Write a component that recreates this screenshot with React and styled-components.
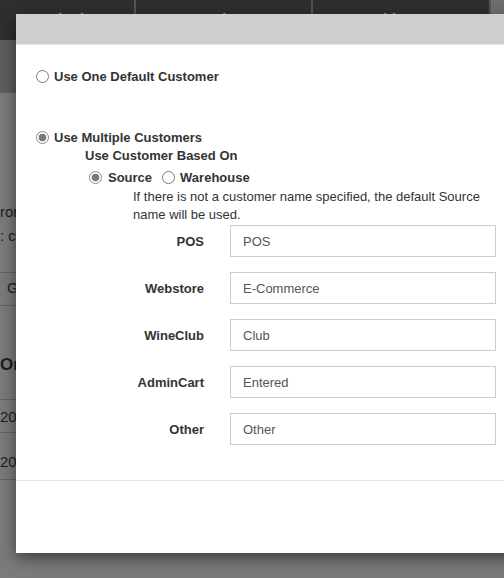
import React from 'react';
import styled, { createGlobalStyle } from 'styled-components';

const GlobalStyle = createGlobalStyle`
  html, body {
    margin: 0;
    padding: 0;
    overflow: hidden;
    background: #7b7b7b;
    font-family: "Liberation Sans", Arial, sans-serif;
  }
`;

const Page = styled.div`
  position: relative;
  width: 504px;
  height: 578px;
  overflow: hidden;
  background: #7b7b7b;
  display: flex;
  flex-direction: column;
`;

const NavBar = styled.div`
  height: 40px;
  display: flex;
  background: #2f2f2f;
  flex-shrink: 0;
`;

const NavTab = styled.div`
  width: ${props => props.width}px;
  flex-shrink: 0;
  border-right: 2px solid #555;
  color: #9a9a9a;
  font-size: 15px;
  font-weight: bold;
  display: flex;
  justify-content: center;
  padding-top: 10px;
  padding-left: ${props => props.indent || 0}px;
  box-sizing: border-box;
`;

const NavRest = styled.div`
  flex: 1;
  background: #6f6f6f;
`;

const SubBar = styled.div`
  height: 53px;
  background: #5d5d5d;
  flex-shrink: 0;
`;

const Content = styled.div`
  display: flex;
  flex-direction: column;
  color: #1e1e1e;
  font-size: 15px;
`;

const Line = styled.div`
  height: ${props => props.h}px;
  line-height: ${props => props.lh || props.h}px;
  padding-left: ${props => props.indent || 0}px;
  white-space: nowrap;
  font-weight: ${props => (props.bold ? 'bold' : 'normal')};
  font-size: ${props => props.size || 15}px;
  border-bottom: ${props => (props.rule ? '1px solid #646464' : 'none')};
  box-sizing: border-box;
`;

const Dialog = styled.div`
  position: absolute;
  left: 16px;
  top: 14px;
  width: 520px;
  height: 539px;
  background: #fff;
  box-shadow: 0 5px 15px rgba(0, 0, 0, 0.5);
  display: flex;
  flex-direction: column;
  color: #333;
  font-size: 13px;
`;

const DialogHeader = styled.div`
  height: 30px;
  background: #cfcfcf;
  border-bottom: 1px solid #e5e5e5;
  flex-shrink: 0;
`;

const DialogBody = styled.div`
  flex: 1;
  padding: 22px 20px 0 20px;
  display: flex;
  flex-direction: column;
`;

const DialogFooter = styled.div`
  height: 72px;
  border-top: 1px solid #e5e5e5;
  flex-shrink: 0;
`;

const Option = styled.label`
  display: flex;
  align-items: center;
  height: 18px;
  font-weight: bold;
  margin-top: ${props => props.mt || 0}px;
  margin-left: ${props => props.ml || 0}px;
  margin-right: ${props => props.mr || 0}px;
`;

const Radio = styled.span`
  width: 11px;
  height: 11px;
  border-radius: 50%;
  border: 1px solid ${props => (props.checked ? '#8a8a8a' : '#7a7a7a')};
  background: ${props => (props.checked
    ? 'radial-gradient(circle, #7a7a7a 0, #7a7a7a 3.5px, #fff 4.2px)'
    : '#fff')};
  margin-right: ${props => props.gap || 5}px;
  flex-shrink: 0;
`;

const SubHeading = styled.div`
  font-weight: bold;
  height: 18px;
  line-height: 18px;
  margin-top: 1px;
  margin-left: 49px;
`;

const ChoiceRow = styled.div`
  display: flex;
  height: 22px;
  align-items: center;
  margin-top: 1px;
  margin-left: 53px;
`;

const Help = styled.div`
  margin-left: 97px;
  width: 360px;
  line-height: 18px;
`;

const Form = styled.div`
  margin-top: 1px;
  display: grid;
  grid-template-columns: 168px 266px;
  column-gap: 26px;
  row-gap: 15px;
`;

const FieldLabel = styled.div`
  font-weight: bold;
  text-align: right;
  display: flex;
  align-items: center;
  justify-content: flex-end;
`;

const Input = styled.input`
  height: 32px;
  box-sizing: border-box;
  border: 1px solid #ccc;
  padding: 0 12px;
  font-family: "Liberation Sans", Arial, sans-serif;
  font-size: 13px;
  color: #555;
  outline: none;
`;

const fields = [
  ['POS', 'POS'],
  ['Webstore', 'E-Commerce'],
  ['WineClub', 'Club'],
  ['AdminCart', 'Entered'],
  ['Other', 'Other'],
];

export default function App() {
  return (
    <Page>
      <GlobalStyle />
      <NavBar>
        <NavTab width={136}>Marketing</NavTab>
        <NavTab width={177}>Settings</NavTab>
        <NavTab width={178} indent={20}>Shipments</NavTab>
        <NavRest />
      </NavBar>
      <SubBar />
      <Content>
        <Line h={107} />
        <Line h={24}>ront</Line>
        <Line h={24}>: cust</Line>
        <Line h={25} rule />
        <Line h={33} lh={29} indent={7} rule>Go</Line>
        <Line h={41} />
        <Line h={36} bold size={17}>Ord</Line>
        <Line h={17} rule />
        <Line h={33} rule>2021</Line>
        <Line h={47} lh={58} rule>2021</Line>
      </Content>

      <Dialog>
        <DialogHeader />
        <DialogBody>
          <Option>
            <Radio />
            Use One Default Customer
          </Option>
          <Option mt={43}>
            <Radio checked />
            Use Multiple Customers
          </Option>
          <SubHeading>Use Customer Based On</SubHeading>
          <ChoiceRow>
            <Option mr={10}>
              <Radio checked gap={6} />
              Source
            </Option>
            <Option>
              <Radio />
              Warehouse
            </Option>
          </ChoiceRow>
          <Help>
            If there is not a customer name specified, the default Source name will be used.
          </Help>
          <Form>
            {fields.map(([label, value]) => (
              <React.Fragment key={label}>
                <FieldLabel>{label}</FieldLabel>
                <Input defaultValue={value} />
              </React.Fragment>
            ))}
          </Form>
        </DialogBody>
        <DialogFooter />
      </Dialog>
    </Page>
  );
}
